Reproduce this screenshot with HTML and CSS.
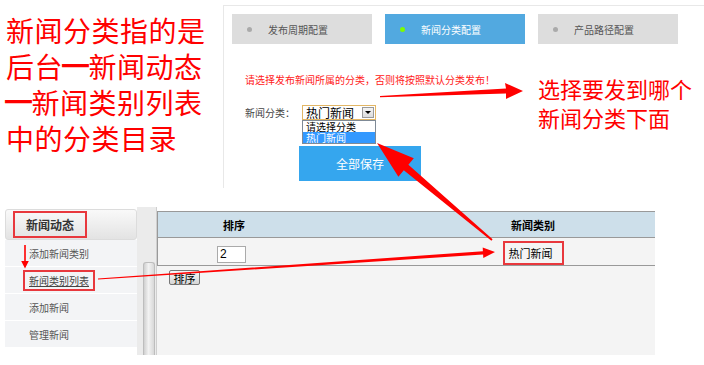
FILE: index.html
```html
<!DOCTYPE html>
<html lang="zh-CN">
<head>
    <meta charset="UTF-8">
    <meta name="viewport" content="width=device-width, initial-scale=1.0">
    <title>新闻分类配置说明</title>
    <link rel="stylesheet" href="styles.css">
</head>
<body>
    <div class="shot">

        <div class="top">
            <div class="note">新闻分类指的是<br>后台<span class="dash">—</span>新闻动态<br><span class="dash">—</span>新闻类别列表<br>中的分类目录</div>

            <div class="config">
                <div class="tabs">
                    <div class="tab"><span class="dot"></span>发布周期配置</div>
                    <div class="tab active"><span class="dot"></span>新闻分类配置</div>
                    <div class="tab"><span class="dot"></span>产品路径配置</div>
                </div>

                <p class="tip">请选择发布新闻所属的分类，否则将按照默认分类发布！</p>

                <div class="field">
                    <label>新闻分类：</label>
                    <div class="select">
                        <span>热门新闻</span>
                        <span class="select-btn"></span>
                        <ul class="options">
                            <li>请选择分类</li>
                            <li class="on">热门新闻</li>
                        </ul>
                    </div>
                </div>

                <button type="button" class="save">全部保存</button>
            </div>
        </div>

        <div class="bottom">
            <div class="side">
                <div class="side-head"><span>新闻动态</span></div>
                <ul class="menu">
                    <li>添加新闻类别</li>
                    <li class="current"><a>新闻类别列表</a></li>
                    <li>添加新闻</li>
                    <li>管理新闻</li>
                </ul>
            </div>

            <div class="scroll"><div class="thumb"></div></div>

            <div class="main">
                <table>
                    <tr>
                        <th class="col-order">排序</th>
                        <th class="col-gap"></th>
                        <th class="col-type">新闻类别</th>
                    </tr>
                    <tr>
                        <td class="order"><input type="text" value="2"></td>
                        <td></td>
                        <td><span class="mark">热门新闻</span></td>
                    </tr>
                </table>
                <button type="button" class="sort-btn">排序</button>
            </div>
        </div>

        <!-- annotations drawn over the screenshots -->
        <div class="callout">选择要发到哪个<br>新闻分类下面</div>

        <svg class="arrows" width="704" height="365" viewBox="0 0 704 365">
            <polygon points="380,96 506,88.5 505,83 523,91 506,99 506,93.5 380,97.2" />
            <polygon points="377,143 413.8,158.3 408.4,164.8 492.6,239.2 491.4,240.8 403.8,170.2 398.4,176.7" />
            <polygon points="495,252 482.7,247.6 482.9,251.2 98,278.4 98,279.6 483.1,254.4 483.3,258" />
            <polygon points="24.2,245 25.8,245 25.8,261 28.8,261 25,268.5 21.2,261 24.2,261" />
        </svg>
    </div>
</body>
</html>
```

FILE: styles.css
```css
html, body {
    margin: 0;
    padding: 0;
    background: #fff;
    font-family: "Noto Sans CJK SC", "Liberation Sans", sans-serif;
}

.shot {
    position: relative;
    width: 704px;
    height: 365px;
    overflow: hidden;
}

/* top half */
.top {
    display: flex;
    height: 188px;
}

.note {
    width: 217px;
    padding: 12px 0 0 6px;
    font-size: 28px;
    line-height: 36px;
    letter-spacing: 0.5px;
    color: #ff0000;
    white-space: nowrap;
}

.note .dash {
    display: inline-block;
    transform: translateY(-8px) scale(1.2, 1.8);
}

.config {
    flex: 1;
    margin-top: 5px;
    padding: 8px 0 0 8px;
    border-top: 1px solid #e8e8e8;
    border-left: 1px solid #e8e8e8;
}

.tabs {
    display: flex;
    gap: 13px;
}

.tab {
    flex: none;
    width: 140px;
    height: 30px;
    display: flex;
    align-items: center;
    background: #dddddd;
    color: #555;
    font-size: 10px;
    white-space: nowrap;
}

.tab .dot {
    width: 5px;
    height: 5px;
    border-radius: 50%;
    background: #aaaaaa;
    margin: 0 16px 0 15px;
}

.tab.active {
    background: #52a9e0;
    color: #fff;
}

.tab.active .dot {
    background: #7cfc00;
}

.tip {
    margin: 29px 0 0 13px;
    font-size: 10px;
    line-height: 14px;
    color: #ff2020;
}

.field {
    display: flex;
    align-items: center;
    height: 15px;
    margin: 18px 0 0 13px;
}

.field label {
    width: 57px;
    font-size: 10px;
    color: #444;
}

.select {
    position: relative;
    width: 74px;
    height: 15px;
    box-sizing: border-box;
    border: 1px solid #e2b665;
    padding-left: 3px;
    display: flex;
    justify-content: space-between;
    font-size: 12px;
    line-height: 13px;
    color: #000;
}

.select-btn {
    position: relative;
    width: 12px;
    height: 11px;
    margin: 1px 1px 0 0;
    box-sizing: border-box;
    border: 1px solid #9a9a9a;
    background: linear-gradient(#f4f4f4, #dcdcdc);
}

.select-btn::after {
    content: "";
    position: absolute;
    left: 2px;
    top: 3px;
    border-left: 3px solid transparent;
    border-right: 3px solid transparent;
    border-top: 3px solid #000;
}

.options {
    position: absolute;
    top: 14px;
    left: -1px;
    width: 74px;
    box-sizing: border-box;
    margin: 0;
    padding: 0;
    list-style: none;
    border: 1px solid #7f8a96;
    background: #fff;
    font-size: 10px;
    line-height: 11px;
}

.options li {
    padding-left: 3px;
    height: 11px;
}

.options li.on {
    background: #3399ff;
    color: #fff;
}

.save {
    display: block;
    width: 122px;
    height: 35px;
    margin: 26px 0 0 67px;
    border: 0;
    background: #35a6ee;
    color: #fff;
    font-size: 12px;
    font-family: inherit;
}

/* bottom half */
.bottom {
    display: flex;
    height: 148px;
    margin-top: 19px;
    padding-left: 5px;
}

.side {
    width: 132px;
    padding-top: 2px;
}

.side-head {
    height: 31px;
    box-sizing: border-box;
    display: flex;
    align-items: center;
    padding-left: 7px;
    border: 1px solid #dcdcdc;
    border-radius: 3px;
    background: linear-gradient(#f9f9f9, #e3e3e3);
}

.side-head span {
    height: 27px;
    box-sizing: border-box;
    padding: 0 11px;
    border: 2px solid #e8383d;
    font-size: 12px;
    line-height: 23px;
    font-weight: bold;
    color: #333;
}

.menu {
    margin: 0;
    padding: 0;
    list-style: none;
    background: #f3f4f6;
}

.menu li {
    height: 27px;
    box-sizing: border-box;
    display: flex;
    align-items: center;
    padding-left: 24px;
    border-bottom: 1px solid #fff;
    font-size: 10px;
    color: #555;
}

.menu .current a {
    margin-left: -6px;
    padding: 1px 4px;
    border: 2px solid #e8383d;
    text-decoration: underline;
    color: #444;
}

.scroll {
    width: 20px;
    box-sizing: border-box;
    display: flex;
    flex-direction: column;
    padding: 55px 1px 0 6px;
    background: #ebebeb;
    border-right: 1px solid #cfcfcf;
}

.thumb {
    flex: 1;
    border: 1px solid #bdbdbd;
    border-bottom: 0;
    border-radius: 3px 3px 0 0;
    background: linear-gradient(to right, #d0d0d0, #f2f2f2 45%, #d8d8d8);
}

.main {
    width: 498px;
    margin-top: 4px;
    background: #f4f4f4;
}

table {
    width: 498px;
    table-layout: fixed;
    border-collapse: collapse;
    border-left: 1px solid #999;
}

.col-order { width: 152px; }
.col-gap { width: 101px; }

th {
    height: 25px;
    padding: 0;
    background: #cddfea;
    border-top: 1px solid #999;
    border-bottom: 1px solid #999;
    font-size: 11px;
    font-weight: bold;
    color: #000;
}

td {
    height: 27px;
    padding: 0;
    border-bottom: 1px solid #999;
    text-align: center;
    vertical-align: middle;
}

td.order {
    text-align: left;
    padding-left: 59px;
}

td input {
    width: 29px;
    height: 17px;
    box-sizing: border-box;
    padding: 0 2px;
    border: 1px solid #aaa;
    font-size: 12px;
    font-family: "Liberation Sans", sans-serif;
    vertical-align: middle;
}

.mark {
    display: inline-block;
    width: 61px;
    height: 24px;
    box-sizing: border-box;
    padding-left: 4px;
    border: 2px solid #e8383d;
    text-align: left;
    font-size: 11px;
    line-height: 20px;
    color: #000;
    vertical-align: middle;
}

.sort-btn {
    display: block;
    width: 31px;
    height: 15px;
    margin: 4px 0 0 12px;
    padding: 0;
    border: 1px solid #777;
    border-radius: 2px;
    background: linear-gradient(#f6f6f6, #d6d6d6);
    font-size: 11px;
    line-height: 12px;
    font-family: inherit;
    color: #000;
}

/* annotations */
.callout {
    position: absolute;
    left: 538px;
    top: 74px;
    font-size: 22px;
    line-height: 29px;
    color: #ff0000;
    white-space: nowrap;
}

.arrows {
    position: absolute;
    left: 0;
    top: 0;
    pointer-events: none;
}

.arrows polygon {
    fill: #ff0000;
}
```
